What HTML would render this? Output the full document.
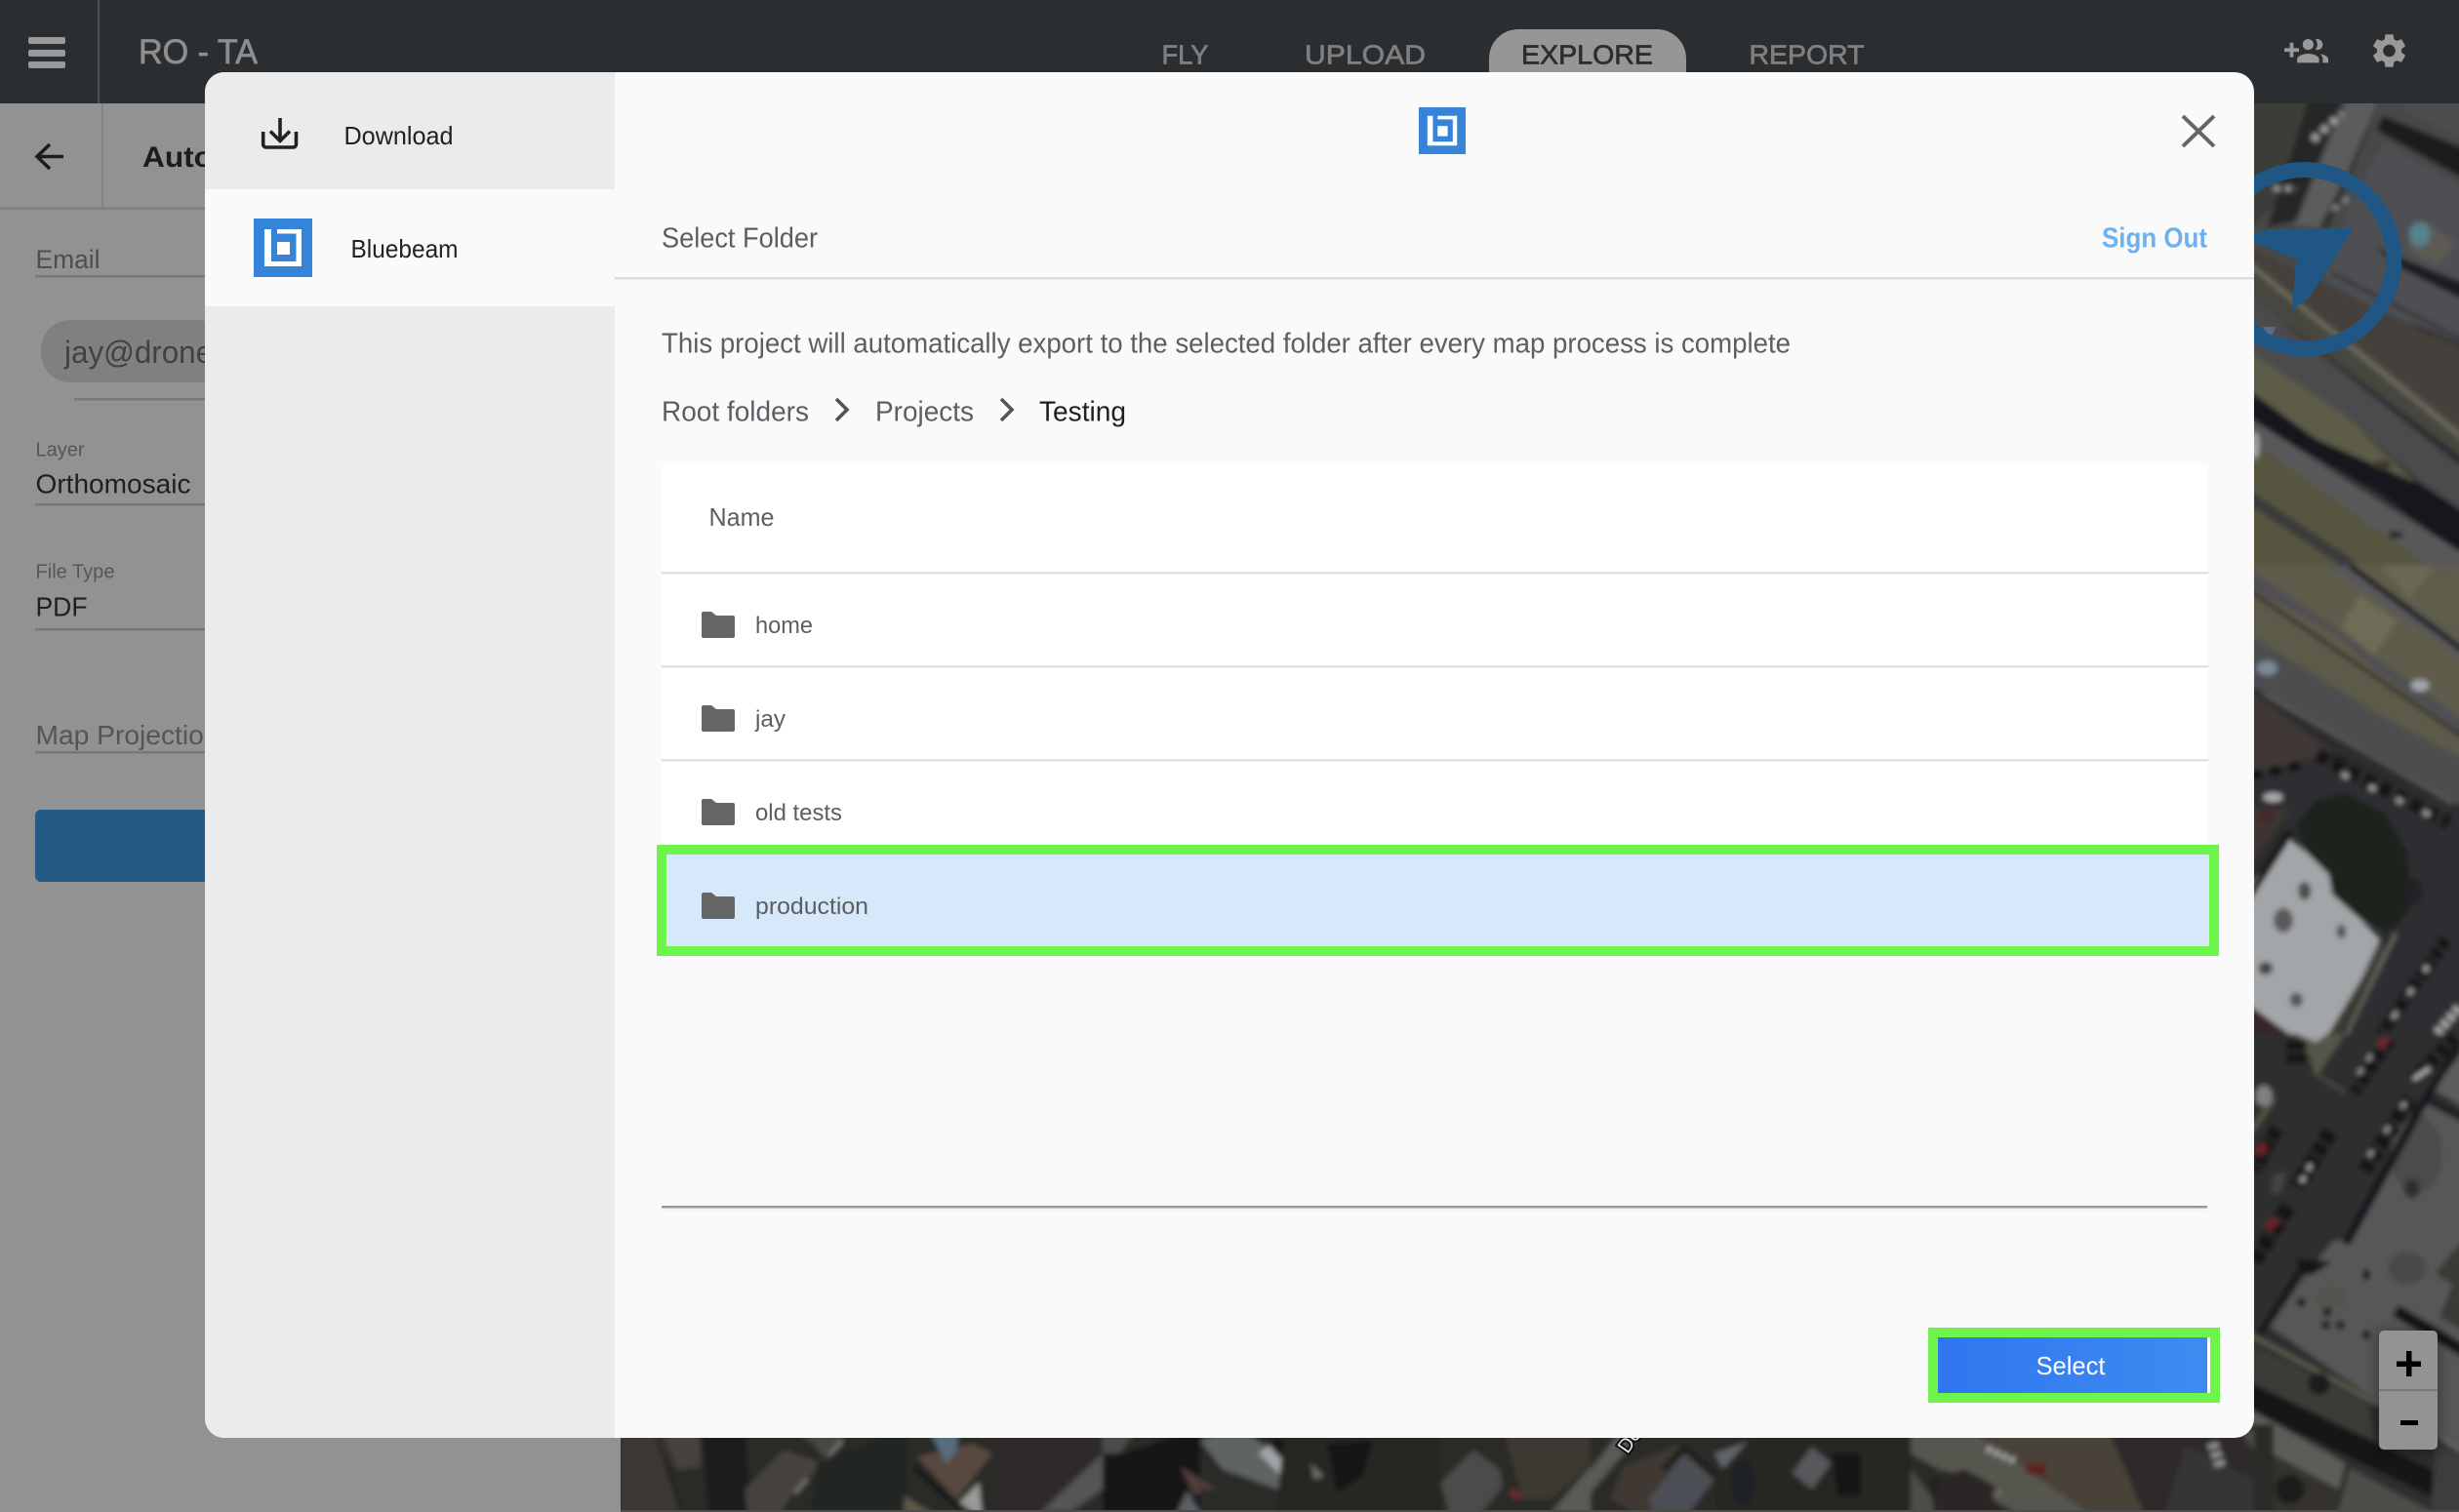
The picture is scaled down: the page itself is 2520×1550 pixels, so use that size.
<!DOCTYPE html>
<html><head><meta charset="utf-8"><title>Bluebeam Select Folder</title>
<style>
html,body{margin:0;padding:0;background:#2d2d2f;width:2520px;height:1550px;overflow:hidden}
svg{display:block}
text{font-family:"Liberation Sans",sans-serif;white-space:pre}
</style></head><body>
<svg xmlns="http://www.w3.org/2000/svg" width="2520" height="1550" viewBox="0 0 2520 1550">
<defs>
<filter id="b" filterUnits="userSpaceOnUse" x="600" y="60" width="1960" height="1530"><feGaussianBlur stdDeviation="2.6"/></filter>
<filter id="s" x="-20%" y="-20%" width="140%" height="140%"><feGaussianBlur stdDeviation="6"/></filter>
<clipPath id="mc"><rect x="210" y="74" width="2100" height="1400" rx="20"/></clipPath>
<clipPath id="z7"><rect x="-60" y="-60" width="800" height="1518"/></clipPath>
<linearGradient id="g" x1="0" y1="0" x2="1" y2="0"><stop offset="0" stop-color="#2f76ef"/><stop offset="1" stop-color="#3e8cf0"/></linearGradient>
</defs>

<!-- MAP -->
<rect x="636" y="106" width="1884" height="1444" fill="#2d2d2f"/>
<g filter="url(#b)">
<g transform="translate(2310,100) scale(.33333)" clip-path="url(#z7)">
 <rect x="-30" y="-30" width="700" height="730" fill="#47484a"/>
 <polygon points="-30,-30 290,-30 120,280 -30,420" fill="#3b3c39"/>
 <polygon points="300,-30 400,-30 210,400 120,390" fill="#5b5c5d"/>
 <polygon points="180,-30 290,-30 130,380 40,400" fill="#262627"/>
 <polygon points="330,160 400,-30 290,230 200,400 230,400" fill="#2d2d2e"/>
 <polygon points="400,-30 670,-30 670,135 500,60" fill="#4d4e4e"/>
 <polygon points="395,55 670,165 670,265 375,100" fill="#1c1c1e"/>
 <polygon points="400,140 670,290 670,770 410,660 215,560 300,320" fill="#4d5052"/>
 <polygon points="470,400 540,390 620,450 560,520 480,470" fill="#5c5a52"/>
 <ellipse cx="510" cy="420" rx="32" ry="38" fill="#56808c"/>
 <polygon points="370,460 670,580 670,635 460,530" fill="#1d1e22"/>
 <polygon points="-30,450 210,570 410,670 670,780 670,1045 300,760 -30,510" fill="#44413b"/>
 <polygon points="-30,510 300,745 670,1040 670,1130 300,850 -30,600" fill="#47463f"/>
 <line x1="-30" y1="500" x2="670" y2="1070" stroke="#6e6c60" stroke-width="14"/>
 <polygon points="-30,600 670,1160 670,1290 520,1190 300,1000 -30,770" fill="#4b4c4e"/>
 <polygon points="-30,770 270,970 500,1185 410,1160 190,1050 -30,900" fill="#5c5b48"/>
 <polygon points="-30,890 190,1050 510,1190 670,1290 670,1440 380,1210 -30,990" fill="#19191a"/>
 <polygon points="-30,975 670,1420 670,1470 570,1470 -30,1040" fill="#59595a"/>
 <polygon points="-30,1040 580,1470 -30,1470" fill="#57563f"/>
 <line x1="-30" y1="1220" x2="300" y2="1440" stroke="#3a3a3a" stroke-width="38"/>
 <line x1="240" y1="540" x2="670" y2="760" stroke="#1f1f1f" stroke-width="7"/>
 <line x1="180" y1="130" x2="270" y2="50" stroke="#a0a0a0" stroke-width="22" stroke-dasharray="22 16"/>
 <line x1="60" y1="280" x2="130" y2="280" stroke="#999" stroke-width="16" stroke-dasharray="20 14"/>
 <line x1="240" y1="345" x2="290" y2="310" stroke="#808080" stroke-width="16" stroke-dasharray="22 18"/>
 <ellipse cx="395" cy="1130" rx="28" ry="15" fill="#3a372e"/>
 <ellipse cx="435" cy="1345" rx="24" ry="12" fill="#2e2b24"/>
 <ellipse cx="2" cy="1070" rx="14" ry="42" fill="#a3a3a3"/>
</g>

<g transform="translate(2310,580) scale(.33333)">
 <polygon points="-30,0 670,0 670,570 -30,100" fill="#5f5c4b"/>
 <polygon points="265,190 325,90 440,170 370,275" fill="#6e6c57"/>
 <polygon points="385,0 555,0 480,100" fill="#6b6954"/>
 <polygon points="500,70 670,0 670,200 480,125" fill="#5f5d4c"/>
 <polygon points="220,0 300,0 480,120 670,260 670,310 470,170" fill="#57585a"/>
 <line x1="295" y1="0" x2="670" y2="280" stroke="#141414" stroke-width="16"/>
 <polygon points="-30,0 250,190 370,280 670,490 670,540 360,310 250,210 -30,60" fill="#4f5052"/>
 <line x1="-30" y1="65" x2="670" y2="545" stroke="#1f1f1f" stroke-width="9"/>
 <polygon points="-30,85 670,555 670,610 400,470 -30,205" fill="#5b5a48"/>
 <polygon points="-30,205 400,470 670,610 670,760 400,600 -30,360" fill="#4c4d4f"/>
 <line x1="30" y1="395" x2="610" y2="730" stroke="#5e5d52" stroke-width="10"/>
 <polygon points="-30,370 240,570 -30,650" fill="#403834"/>
 <polygon points="-30,640 190,590 610,740 670,800 670,1470 300,1470 440,1130 480,900 300,700 110,820 -30,760" fill="#2e2e30"/>
 <polygon points="-30,740 110,750 -30,950" fill="#3d3431"/>
 <polygon points="190,720 280,700 400,760 470,880 485,1050 420,1125 330,1090 240,1010 230,950 160,880 130,800" fill="#1f211d"/>
 <polygon points="110,840 160,880 230,950 240,1010 330,1090 390,1150 230,1470 150,1470 -30,1345 -30,1000" fill="#a3a6a8"/>
 <line x1="115" y1="815" x2="-30" y2="1040" stroke="#171717" stroke-width="22"/>
 <line x1="435" y1="1130" x2="270" y2="1470" stroke="#6b6a5e" stroke-width="12"/>
 <polygon points="390,1170 410,1170 250,1470 210,1470" fill="#3c3b30"/>
 <line x1="195" y1="580" x2="600" y2="790" stroke="#161617" stroke-width="42" stroke-dasharray="36 18"/>
 <line x1="270" y1="640" x2="570" y2="780" stroke="#a0a0a0" stroke-width="16" stroke-dasharray="22 70"/>
 <line x1="-10" y1="645" x2="160" y2="610" stroke="#111" stroke-width="26" stroke-dasharray="34 26"/>
 <ellipse cx="58" cy="712" rx="30" ry="14" fill="#aaa"/>
 <ellipse cx="35" cy="770" rx="28" ry="24" fill="#452a2a"/>
 <line x1="590" y1="1150" x2="390" y2="1440" stroke="#161617" stroke-width="40" stroke-dasharray="28 10"/>
 <line x1="535" y1="1230" x2="400" y2="1430" stroke="#999" stroke-width="16" stroke-dasharray="22 64"/>
 <line x1="630" y1="1360" x2="560" y2="1440" stroke="#aaa" stroke-width="28" stroke-dasharray="18 10"/>
 <ellipse cx="510" cy="368" rx="28" ry="18" fill="#a0a6ac"/>
 <ellipse cx="40" cy="315" rx="32" ry="22" fill="#7e8898"/>
 <ellipse cx="155" cy="1000" rx="20" ry="28" fill="#4e4e4e"/>
 <ellipse cx="90" cy="1090" rx="30" ry="38" fill="#5a5a5c"/>
 <ellipse cx="268" cy="1125" rx="14" ry="22" fill="#505052"/>
 <ellipse cx="35" cy="1238" rx="22" ry="20" fill="#444"/>
 <ellipse cx="130" cy="1335" rx="20" ry="22" fill="#555"/>
 <ellipse cx="490" cy="1000" rx="26" ry="40" fill="#242428"/>
 <polygon points="-30,1340 150,1470 -30,1470" fill="#35282a"/>
</g>

<g transform="translate(2310,1060) scale(.33333)">
 <rect x="-30" y="0" width="700" height="1500" fill="#2d2d2f"/>
 <polygon points="130,0 280,0 190,135 170,70" fill="#54544a"/>
 <polygon points="130,0 225,0 190,25" fill="#a1a3a3"/>
 <line x1="200" y1="130" x2="280" y2="180" stroke="#5c5c55" stroke-width="5"/>
 <polygon points="670,20 550,170 670,240" fill="#5a5c5d"/>
 <polygon points="520,210 670,290 670,600 560,740 610,770 570,870 670,930 670,1300 570,1240 380,1130 50,900 160,740 240,640 280,630 400,420 510,210" fill="#565859"/>
 <ellipse cx="500" cy="370" rx="80" ry="120" fill="#4b4c4a"/>
 <ellipse cx="470" cy="720" rx="60" ry="50" fill="#4a4a48"/>
 <ellipse cx="240" cy="810" rx="50" ry="35" fill="#55534e"/>
 <polygon points="625,25 510,205 270,640 295,650 530,220 630,50" fill="#18181a"/>
 <polygon points="130,690 240,700 180,740 140,740" fill="#161617"/>
 <line x1="140" y1="730" x2="15" y2="925" stroke="#18181a" stroke-width="18"/>
 <line x1="540" y1="205" x2="670" y2="270" stroke="#18181a" stroke-width="12"/>
 <polygon points="560,730 670,600 670,930 570,870 610,770" fill="#3a3a34"/>
 <line x1="435" y1="850" x2="670" y2="990" stroke="#131314" stroke-width="38"/>
 <polygon points="-30,945 350,1130 380,1290 -30,1065" fill="#3a3a38"/>
 <line x1="-30" y1="915" x2="385" y2="1140" stroke="#62614f" stroke-width="12"/>
 <line x1="-30" y1="1105" x2="670" y2="1440" stroke="#121213" stroke-width="76"/>
 <polygon points="-30,1145 280,1320 260,1400 -30,1245" fill="#5d5d58"/>
 <polygon points="295,1335 600,1500 250,1500" fill="#4d4e49"/>
 <polygon points="-30,1245 260,1400 240,1500 -30,1500" fill="#34332f"/>
 <ellipse cx="110" cy="1400" rx="45" ry="45" fill="#1e1f1c"/>
 <line x1="570" y1="1240" x2="670" y2="1305" stroke="#6a6a60" stroke-width="10"/>
 <polygon points="560,1260 670,1320 670,1500 540,1500" fill="#3d3e3c"/>
 <line x1="620" y1="10" x2="490" y2="140" stroke="#121213" stroke-width="46" stroke-dasharray="30 12"/>
 <line x1="540" y1="105" x2="490" y2="140" stroke="#aaa" stroke-width="14"/>
 <line x1="480" y1="200" x2="340" y2="420" stroke="#121213" stroke-width="48" stroke-dasharray="34 12"/>
 <line x1="465" y1="210" x2="330" y2="410" stroke="#999" stroke-width="14" stroke-dasharray="20 70"/>
 <line x1="420" y1="15" x2="310" y2="180" stroke="#141415" stroke-width="38" stroke-dasharray="34 10"/>
 <line x1="410" y1="12" x2="385" y2="40" stroke="#6c2a30" stroke-width="24"/>
 <line x1="360" y1="65" x2="320" y2="125" stroke="#999" stroke-width="12" stroke-dasharray="20 30"/>
 <line x1="235" y1="300" x2="130" y2="470" stroke="#121213" stroke-width="50" stroke-dasharray="36 10"/>
 <line x1="175" y1="400" x2="140" y2="465" stroke="#a0a0a0" stroke-width="14" stroke-dasharray="22 20"/>
 <line x1="105" y1="530" x2="0" y2="700" stroke="#141415" stroke-width="50" stroke-dasharray="44 10"/>
 <line x1="70" y1="570" x2="40" y2="600" stroke="#6a2328" stroke-width="26"/>
 <line x1="70" y1="290" x2="0" y2="420" stroke="#141415" stroke-width="44" stroke-dasharray="36 8"/>
 <line x1="35" y1="340" x2="10" y2="370" stroke="#6c2328" stroke-width="26"/>
 <line x1="60" y1="200" x2="-10" y2="300" stroke="#56564a" stroke-width="16"/>
 <ellipse cx="30" cy="190" rx="26" ry="32" fill="#808080"/>
 <polygon points="60,430 100,425 80,490 50,490" fill="#444440"/>
 <line x1="130" y1="20" x2="130" y2="100" stroke="#151516" stroke-width="60" stroke-dasharray="30 10"/>
 <ellipse cx="485" cy="475" rx="24" ry="30" fill="#2d2d2f"/>
 <ellipse cx="145" cy="825" rx="14" ry="14" fill="#1c1c1c"/>
 <ellipse cx="225" cy="855" rx="14" ry="14" fill="#1c1c1c"/>
 <ellipse cx="220" cy="895" rx="14" ry="14" fill="#1c1c1c"/>
 <ellipse cx="265" cy="895" rx="14" ry="14" fill="#1c1c1c"/>
 <ellipse cx="345" cy="925" rx="14" ry="14" fill="#1c1c1c"/>
 <ellipse cx="345" cy="740" rx="12" ry="18" fill="#1f1f1f"/>
 <ellipse cx="200" cy="1075" rx="34" ry="34" fill="#1b1b1a"/>
</g>

<rect x="630" y="1460" width="1700" height="100" fill="#2a2927"/>
<g transform="translate(630,1470) scale(.33333)">
 <polygon points="18,-20 140,-20 200,260 18,260" fill="#3c3936"/>
 <polygon points="140,-20 260,-20 265,100 190,110" fill="#454341"/>
 <line x1="130" y1="12" x2="205" y2="240" stroke="#1c1c1b" stroke-width="8"/>
 <polygon points="265,-20 400,-20 420,260 290,260" fill="#1b1b1a"/>
 <polygon points="400,170 520,50 640,90 540,190 500,260 410,260" fill="#47433f"/>
 <polygon points="530,-20 720,-20 650,80 600,20" fill="#4a4643"/>
 <line x1="700" y1="20" x2="510" y2="230" stroke="#8a8a8a" stroke-width="7" stroke-dasharray="60 100"/>
 <polygon points="620,90 900,-20 900,260 600,260" fill="#232522"/>
 <polygon points="930,70 1100,30 1160,60 1050,200" fill="#594a40"/>
 <polygon points="960,-20 1060,-20 1050,50 1020,90" fill="#586c80"/>
 <line x1="920" y1="100" x2="1070" y2="240" stroke="#151515" stroke-width="16"/>
 <polygon points="890,190 1000,260 890,260" fill="#5d5848"/>
 <polygon points="1060,210 1120,150 1130,260" fill="#9a9a98"/>
 <polygon points="1160,-20 1500,-20 1500,260 1150,260" fill="#2f2c29"/>
 <polygon points="1310,240 1500,60 1500,170 1400,240" fill="#555552"/>
</g>
<g transform="translate(1130,1470) scale(.33333)">
 <polygon points="0,-20 110,-20 0,130" fill="#4b4b48"/>
 <polygon points="0,60 60,60 300,-20 300,260 0,260" fill="#171816"/>
 <polygon points="300,20 420,-20 600,110 540,170 430,130 370,110" fill="#5f6364"/>
 <polygon points="480,60 510,35 580,110 555,135" fill="#a0a5a8"/>
 <polygon points="510,15 570,20 570,80" fill="#101012"/>
 <polygon points="240,100 350,170 280,190" fill="#4f3e3b"/>
 <polygon points="220,260 260,175 310,260" fill="#5a6066"/>
 <polygon points="300,170 540,170 530,260 310,260" fill="#2a2a28"/>
 <polygon points="560,-20 1040,-20 1040,260 530,260" fill="#262624"/>
 <polygon points="640,90 680,130 650,140" fill="#6a6e6a"/>
 <polygon points="690,30 830,20 800,130 720,180" fill="#161615"/>
 <polygon points="1040,150 1140,50 1220,110 1230,160 1150,260 1070,260" fill="#4b4c48"/>
 <polygon points="1230,-20 1500,-20 1500,90 1380,200 1290,200" fill="#3d3732"/>
 <polygon points="1380,240 1500,100 1500,260" fill="#5a5a56"/>
 <polygon points="1250,170 1285,180 1285,200 1255,195" fill="#702a2e"/>
</g>
<g transform="translate(1630,1470) scale(.33333)">
 <polygon points="0,110 100,-20 170,-20 0,180" fill="#5a5a56"/>
 <polygon points="100,100 280,30 390,120 170,260 60,200" fill="#3f3833"/>
 <polygon points="180,200 285,65 380,140 290,260 200,260" fill="#4c5054"/>
 <line x1="225" y1="110" x2="290" y2="40" stroke="#1b1b1a" stroke-width="20"/>
 <line x1="290" y1="40" x2="385" y2="130" stroke="#1b1b1a" stroke-width="18"/>
 <polygon points="380,60 520,12 430,80 410,110" fill="#60656a"/>
 <polygon points="520,-20 985,-20 985,260 390,260 380,140" fill="#282624"/>
 <ellipse cx="470" cy="150" rx="36" ry="70" fill="#1e2128"/>
 <polygon points="620,120 680,40 740,90 680,170" fill="#56595b"/>
 <polygon points="740,60 830,60 830,190 760,190" fill="#171716"/>
 <polygon points="985,-20 1130,-20 1500,260 1340,260 985,60" fill="#56564f"/>
 <polygon points="985,110 985,260 1100,260" fill="#4d4d48"/>
 <polygon points="1130,-20 1500,-20 1500,240" fill="#4a4238"/>
 <polygon points="1340,90 1400,100 1390,130 1350,120" fill="#5b2024"/>
 <line x1="1225" y1="45" x2="1275" y2="75" stroke="#aaa" stroke-width="16" stroke-dasharray="14 8"/>
 <line x1="1300" y1="100" x2="1250" y2="190" stroke="#8a8a88" stroke-width="5"/>
 <polygon points="1040,140 1150,110 1250,160 1200,230 1060,260" fill="#262422"/>
</g>
<g transform="translate(1900,1200) scale(.3953,.3333)">
 <polygon points="580,800 1040,800 1040,1080 580,1080" fill="#2d2b29"/>
 <polygon points="150,800 300,800 640,1080 500,1080" fill="#56564f"/>
 <polygon points="300,800 660,800 760,1080 640,1080" fill="#4a4238"/>
 <polygon points="860,850 1037,950 1037,1080 800,1080" fill="#363638"/>
 <line x1="930" y1="840" x2="950" y2="910" stroke="#a0a0a0" stroke-width="28" stroke-dasharray="14 14"/>
 <polygon points="1000,800 1037,800 1037,860" fill="#4b4b46"/>
 <polygon points="445,900 500,900 495,940 450,935" fill="#5b2024"/>
 <line x1="345" y1="855" x2="420" y2="895" stroke="#aaa" stroke-width="18" stroke-dasharray="14 8"/>
 <polygon points="230,920 350,960 380,1080 200,1080" fill="#2a2725"/>
</g>
</g>
<text transform="translate(1668,1491) rotate(-55)" font-size="20" fill="#e8e8e8" stroke="#111" stroke-width="4" paint-order="stroke">De</text>
<rect x="636" y="1548" width="1884" height="2" fill="#4c4c4a"/>

<!-- Compass -->
<g transform="translate(2310,100) scale(.33333)">
 <circle cx="155" cy="497" r="275" fill="none" stroke="#1f5684" stroke-width="48"/>
 <polygon points="305,402 50,405 -40,430 130,497 115,655 170,615" fill="#1f5684"/>
 <polygon points="25,705 68,705 55,730 40,725" fill="#5b6a80"/>
</g>

<!-- Left panel -->
<rect x="0" y="106" width="636" height="1444" fill="#929292"/>
<rect x="0" y="212" width="636" height="3" fill="#828282"/>
<rect x="104" y="106" width="2" height="108" fill="#828282"/>
<path d="M65 160.5H39M51 148L38 160.5L51 173" fill="none" stroke="#1c1c1c" stroke-width="3.6"/>
<text x="146" y="171" font-size="30" font-weight="bold" fill="#1c1c1c" textLength="72" lengthAdjust="spacingAndGlyphs">Auto</text>
<text x="36.500" y="275" font-size="27" fill="#4e4e4e" textLength="66" lengthAdjust="spacingAndGlyphs">Email</text>
<rect x="36" y="282" width="174" height="2.500" fill="#787878"/>
<rect x="42" y="328" width="190" height="64" rx="30" fill="#808080"/>
<text x="66" y="372" font-size="32" fill="#414141" textLength="152" lengthAdjust="spacingAndGlyphs">jay@drone</text>
<rect x="76" y="408" width="134" height="2.500" fill="#787878"/>
<text x="36.500" y="467.500" font-size="20.500" fill="#565656" textLength="50" lengthAdjust="spacingAndGlyphs">Layer</text>
<text x="36.500" y="505.500" font-size="28" fill="#1f1f1f" textLength="159" lengthAdjust="spacingAndGlyphs">Orthomosaic</text>
<rect x="36" y="516" width="174" height="2.500" fill="#787878"/>
<text x="36.500" y="592.500" font-size="20.500" fill="#565656" textLength="81" lengthAdjust="spacingAndGlyphs">File Type</text>
<text x="36.500" y="631.500" font-size="28" fill="#1f1f1f" textLength="53" lengthAdjust="spacingAndGlyphs">PDF</text>
<rect x="36" y="644" width="174" height="2.500" fill="#787878"/>
<text x="36.500" y="763" font-size="28" fill="#555" textLength="188" lengthAdjust="spacingAndGlyphs">Map Projection</text>
<rect x="36" y="770" width="174" height="2.500" fill="#787878"/>
<rect x="36" y="830" width="190" height="74" rx="6" fill="#245a85"/>

<!-- Top nav -->
<rect x="0" y="0" width="2520" height="106" fill="#2b2e31"/>
<rect x="100" y="0" width="2" height="106" fill="#4e5154"/>
<rect x="29" y="38" width="38" height="7" rx="2" fill="#9a9a9a"/>
<rect x="29" y="51" width="38" height="7" rx="2" fill="#9a9a9a"/>
<rect x="29" y="63" width="38" height="7" rx="2" fill="#9a9a9a"/>
<text x="142" y="65" font-size="35" fill="#8e8e8e" stroke="#8e8e8e" stroke-width=".7" textLength="122" lengthAdjust="spacingAndGlyphs">RO - TA</text>
<text x="1190.500" y="65.500" font-size="28" fill="#7f7f7f" stroke="#7f7f7f" stroke-width=".7" textLength="48" lengthAdjust="spacingAndGlyphs">FLY</text>
<text x="1337" y="65.500" font-size="28" fill="#7f7f7f" stroke="#7f7f7f" stroke-width=".7" textLength="124" lengthAdjust="spacingAndGlyphs">UPLOAD</text>
<rect x="1526" y="30" width="202" height="80" rx="30" fill="#969696"/>
<text x="1559" y="65.500" font-size="28" fill="#2b2e31" stroke="#2b2e31" stroke-width=".7" textLength="135" lengthAdjust="spacingAndGlyphs">EXPLORE</text>
<text x="1792.500" y="65.500" font-size="28" fill="#7f7f7f" stroke="#7f7f7f" stroke-width=".7" textLength="118" lengthAdjust="spacingAndGlyphs">REPORT</text>
<g transform="translate(2341,30.600) scale(1.875)"><path fill="#999" d="M8 10H5V7H3v3H0v2h3v3h2v-3h3v-2zm10 1c1.660 0 2.990-1.340 2.990-3S19.660 5 18 5c-.32 0-.63.05-.91.14.57.81.9 1.790.9 2.860s-.34 2.040-.9 2.860c.28.09.59.14.91.14zm-5 0c1.660 0 2.990-1.340 2.990-3S14.660 5 13 5s-3 1.340-3 3 1.340 3 3 3zm6.620 2.160c.83.73 1.380 1.660 1.380 2.840v2h3v-2c0-1.540-2.370-2.490-4.380-2.840zM13 13c-2 0-6 1-6 3v2h12v-2c0-2-4-3-6-3z"/></g>
<g transform="translate(2427.500,31) scale(1.750)"><path fill="#999" d="M19.140 12.940c.04-.3.06-.61.06-.94 0-.32-.02-.64-.07-.94l2.030-1.580a.49.49 0 0 0 .12-.61l-1.920-3.320a.488.488 0 0 0-.59-.22l-2.390.96c-.5-.38-1.030-.7-1.620-.94l-.36-2.540a.484.484 0 0 0-.48-.41h-3.840c-.24 0-.43.17-.47.41l-.36 2.540c-.59.24-1.130.57-1.620.94l-2.390-.96c-.22-.08-.47 0-.59.22L2.740 8.870c-.12.21-.08.47.12.61l2.030 1.580c-.05.3-.09.63-.09.94s.02.64.07.94l-2.030 1.580a.49.49 0 0 0-.12.61l1.920 3.320c.12.22.37.29.59.22l2.390-.96c.5.38 1.030.7 1.620.94l.36 2.540c.05.24.24.41.48.41h3.840c.24 0 .44-.17.47-.41l.36-2.540c.59-.24 1.130-.56 1.620-.94l2.390.96c.22.08.47 0 .59-.22l1.920-3.320c.12-.22.07-.47-.12-.61l-2.010-1.580zM12 15.600c-1.980 0-3.600-1.620-3.600-3.600s1.620-3.600 3.600-3.600 3.600 1.620 3.600 3.600-1.620 3.600-3.600 3.600z"/></g>

<!-- Zoom control -->
<rect x="2434" y="1362" width="68" height="130" rx="8" fill="#000" opacity=".25" filter="url(#s)"/>
<rect x="2438" y="1364" width="60" height="122" rx="5" fill="#939393"/>
<rect x="2438" y="1424" width="60" height="2" fill="#7a7a7a"/>
<rect x="2456" y="1395.500" width="25" height="5.500" fill="#000"/>
<rect x="2466" y="1385" width="5.500" height="26" fill="#000"/>
<rect x="2460" y="1456" width="18" height="5" fill="#000"/>

<!-- Modal -->
<rect x="210" y="74" width="2100" height="1400" rx="20" fill="#fafafa"/>
<g clip-path="url(#mc)">
 <rect x="210" y="74" width="420" height="1400" fill="#ebebeb"/>
 <rect x="210" y="194" width="420" height="120" fill="#fafafa"/>
</g>
<path d="M287 121V143M277 134.500L287 144.500L297 134.500M269.700 135V148a3 3 0 0 0 3 3H300.500a3 3 0 0 0 3-3V135" fill="none" stroke="#222" stroke-width="3.600"/>
<text x="352.500" y="148" font-size="26" fill="#222" textLength="112" lengthAdjust="spacingAndGlyphs">Download</text>

<g>
 <rect x="260" y="224" width="60" height="60" fill="#3584d9"/>
 <path fill-rule="evenodd" fill="#fff" d="M271 235h7v33h25.500v-28.500h-19.500V235h25v38H271z"/>
 <rect x="284" y="248" width="13" height="13" fill="#fff"/>
</g>
<text x="359.500" y="264" font-size="26" fill="#222" textLength="110" lengthAdjust="spacingAndGlyphs">Bluebeam</text>

<g transform="translate(1454,110) scale(.8)">
 <rect x="0" y="0" width="60" height="60" fill="#3584d9"/>
 <path fill-rule="evenodd" fill="#fff" d="M11 11h7v33h25.500v-28.500h-19.500V11h25v38H11z"/>
 <rect x="24" y="24" width="13" height="13" fill="#fff"/>
</g>
<path d="M2237 119L2269 150M2269 119L2237 150" stroke="#666" stroke-width="4" fill="none"/>

<text x="678" y="253.500" font-size="28.500" fill="#5b5f63" textLength="160" lengthAdjust="spacingAndGlyphs">Select Folder</text>
<text x="2154" y="253.500" font-size="28.500" font-weight="bold" fill="#6eb1ef" textLength="108" lengthAdjust="spacingAndGlyphs">Sign Out</text>
<rect x="630" y="284" width="1680" height="2.500" fill="#dcdcdc"/>
<text x="678" y="361.500" font-size="28.500" fill="#5b5f63" textLength="1157" lengthAdjust="spacingAndGlyphs">This project will automatically export to the selected folder after every map process is complete</text>
<text x="678" y="431.500" font-size="28.500" fill="#5b5f63" textLength="151" lengthAdjust="spacingAndGlyphs">Root folders</text>
<path d="M857 409L868 420L857 431" fill="none" stroke="#555" stroke-width="3.600"/>
<text x="897" y="431.500" font-size="28.500" fill="#5b5f63" textLength="101" lengthAdjust="spacingAndGlyphs">Projects</text>
<path d="M1026 409L1037 420L1026 431" fill="none" stroke="#555" stroke-width="3.600"/>
<text x="1065" y="431.500" font-size="28.500" fill="#1f1f1f" textLength="89" lengthAdjust="spacingAndGlyphs">Testing</text>

<!-- Table -->
<rect x="678" y="476" width="1585" height="390" fill="#fff"/>
<rect x="678" y="586" width="1585" height="2.500" fill="#e2e2e2"/>
<rect x="678" y="682" width="1585" height="2.500" fill="#e2e2e2"/>
<rect x="678" y="778" width="1585" height="2.500" fill="#e2e2e2"/>
<text x="726.500" y="539" font-size="26" fill="#5b5f63" textLength="67" lengthAdjust="spacingAndGlyphs">Name</text>

<rect x="673" y="866" width="1601" height="114" fill="#6ef54c"/>
<rect x="683" y="876" width="1581" height="94" fill="#d6e8fa"/>

<g fill="#666">
 <path d="M721 627h8l5 4h17a2 2 0 0 1 2 2v19a2 2 0 0 1-2 2h-30a2 2 0 0 1-2-2v-23a2 2 0 0 1 2-2z"/>
 <path d="M721 723h8l5 4h17a2 2 0 0 1 2 2v19a2 2 0 0 1-2 2h-30a2 2 0 0 1-2-2v-23a2 2 0 0 1 2-2z"/>
 <path d="M721 819h8l5 4h17a2 2 0 0 1 2 2v19a2 2 0 0 1-2 2h-30a2 2 0 0 1-2-2v-23a2 2 0 0 1 2-2z"/>
 <path d="M721 915h8l5 4h17a2 2 0 0 1 2 2v19a2 2 0 0 1-2 2h-30a2 2 0 0 1-2-2v-23a2 2 0 0 1 2-2z"/>
</g>
<text x="774" y="649" font-size="24" fill="#5b5f63" textLength="59" lengthAdjust="spacingAndGlyphs">home</text>
<text x="774" y="745" font-size="24" fill="#5b5f63" textLength="31" lengthAdjust="spacingAndGlyphs">jay</text>
<text x="774" y="841" font-size="24" fill="#5b5f63" textLength="89" lengthAdjust="spacingAndGlyphs">old tests</text>
<text x="774" y="937" font-size="24" fill="#5b5f63" textLength="116" lengthAdjust="spacingAndGlyphs">production</text>

<rect x="678" y="1238" width="1584" height="3" fill="#000" opacity=".12" filter="url(#s)"/>
<rect x="678" y="1236" width="1584" height="2.500" fill="#9a9a9a"/>

<!-- Select button -->
<rect x="1976" y="1361" width="299" height="77" fill="#6ef54c"/>
<rect x="1986" y="1371" width="279" height="57" fill="#fff"/>
<rect x="1986" y="1371" width="276" height="57" fill="url(#g)"/>
<text x="2086.500" y="1409" font-size="26" fill="#fff" textLength="71" lengthAdjust="spacingAndGlyphs">Select</text>
</svg>
</body></html>
